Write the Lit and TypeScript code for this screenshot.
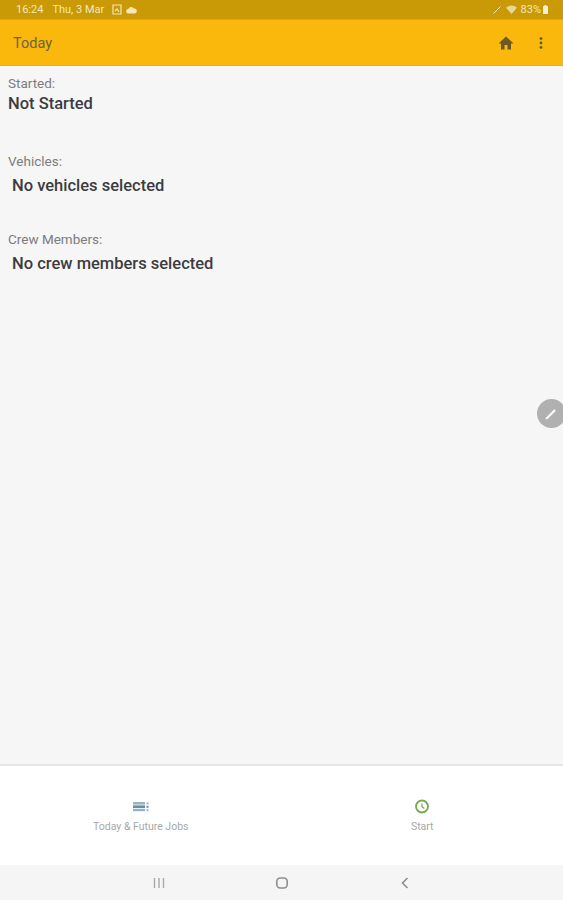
import { LitElement, html, css } from "lit";
import { customElement } from "lit/decorators.js";

@customElement("app-root")
export class AppRoot extends LitElement {
  static styles = css`
    :host { display: flex; flex-direction: column; width: 563px; height: 900px; font-family: Roboto, "Liberation Sans", sans-serif; background: #f6f6f6; overflow: hidden; }
    .status { height: 19px; flex: none; background: #c99a05; color: #f3e6bd; font-size: 11px; display: flex; align-items: center; padding: 0 15px 0 16px; box-sizing: border-box; }
    .status .date { margin-left: 9px; }
    .status svg { display: block; }
    .status .left-icons { display: flex; align-items: center; gap: 4px; margin-left: 8px; }
    .spacer { flex: 1; }
    .status .right-icons { display: flex; align-items: center; gap: 2px; }
    .status .right-icons .wifi { margin: 0 2px 0 3px; }
    .appbar { height: 47px; flex: none; background: #f9b80b; border-top: 1px solid #ec9a3c; border-bottom: 1px solid #e8ad12; box-sizing: border-box; display: flex; align-items: center; padding: 2px 20px 0 13px; color: #6f6240; font-size: 14.5px; font-weight: 400; }
    .appbar .actions { display: flex; align-items: center; gap: 25px; margin-top: -2px; }
    .appbar svg { display: block; }
    .content { flex: 1; position: relative; padding: 10px 8px 0; box-sizing: border-box; color: #3c3c40; }
    .label { font-size: 13.5px; line-height: 15px; color: #7c7c7f; }
    .value { font-size: 16.5px; line-height: 20px; font-weight: 500; margin-top: 3px; }
    .section { height: 78px; }
    .indent { padding-left: 4px; margin-top: 7px; }
    .fab { position: absolute; right: -3px; top: 333px; width: 29px; height: 29px; border-radius: 50%; background: #b0b0b0; display: flex; align-items: center; padding-left: 7px; box-sizing: border-box; }
    .tabs { height: 101px; flex: none; background: #fff; border-top: 2px solid #e6e6e6; box-sizing: border-box; display: grid; grid-template-columns: 1fr 1fr; }
    .tab { display: flex; flex-direction: column; align-items: center; padding-top: 35px; font-size: 10.5px; color: #a8a8a8; }
    .tab span { margin-top: 8px; line-height: 13px; }
    .tab svg { display: block; }
    .tab .clock { margin-top: -3px; }
    .tab .start { margin-top: 6px; }
    .nav { height: 35px; flex: none; background: #f5f5f5; display: grid; grid-template-columns: 1fr 1fr 1fr; padding: 0 97px; box-sizing: border-box; align-items: center; justify-items: center; }
    .nav svg { display: block; }
  `;

  render() {
    return html`
      <div class="status">
        <span>16:24</span><span class="date">Thu, 3 Mar</span>
        <div class="left-icons">
          <svg width="10" height="11" viewBox="0 0 10 11" fill="none" stroke="#f3e6bd" stroke-width="1.2"><path d="M1 1h8v9H1z"/><path d="M3 7l2-2 2 3" /></svg>
          <svg width="11" height="8" viewBox="0 0 11 8" fill="#f3e6bd"><path d="M2.5 7.5a2.2 2.2 0 0 1-.3-4.4A3.2 3.2 0 0 1 8 2.5a2.5 2.5 0 0 1 .6 5z"/></svg>
        </div>
        <div class="spacer"></div>
        <div class="right-icons">
          <svg width="8" height="8" viewBox="0 0 8 8" stroke="#f3e6bd" fill="none"><path d="M0.5 7.5l7-7"/></svg>
          <svg class="wifi" width="11" height="9" viewBox="0 0 11 9" fill="#e8d597"><path d="M0 2.8A8 8 0 0 1 11 2.8L5.5 9z"/></svg>
          <span>83%</span>
          <svg width="5" height="9" viewBox="0 0 5 9" fill="#f6efd8"><path d="M1.5 0h2v1H5v8H0V1h1.5z"/></svg>
        </div>
      </div>
      <div class="appbar">
        <span>Today</span>
        <div class="spacer"></div>
        <div class="actions">
          <svg width="16" height="14" viewBox="0 0 16 14" fill="#6b5a25"><path d="M8 0.5L0.5 7.5H3V13.5H6.5V9H9.5V13.5H13V7.5H15.5z"/></svg>
          <svg width="4" height="12" viewBox="0 0 4 12" fill="#5f5a30"><circle cx="2" cy="1.6" r="1.4"/><circle cx="2" cy="6" r="1.4"/><circle cx="2" cy="10.4" r="1.4"/></svg>
        </div>
      </div>
      <div class="content">
        <div class="section">
          <div class="label">Started:</div>
          <div class="value">Not Started</div>
        </div>
        <div class="section">
          <div class="label">Vehicles:</div>
          <div class="value indent">No vehicles selected</div>
        </div>
        <div class="section">
          <div class="label">Crew Members:</div>
          <div class="value indent">No crew members selected</div>
        </div>
        <div class="fab">
          <svg width="14" height="14" viewBox="0 0 14 14" fill="#fff"><path d="M1.5 12.5l.6-2L10.3 2.2l1.6 1.6-8.3 8.1z"/></svg>
        </div>
      </div>
      <div class="tabs">
        <div class="tab">
          <svg width="16" height="11" viewBox="0 0 16 11">
            <rect x="0" y="1" width="12" height="2.6" fill="#9db4c0"/>
            <rect x="0" y="4.4" width="12" height="2.6" fill="#5e93a5"/>
            <rect x="0" y="7.8" width="12" height="2.4" fill="#8fb6bf"/>
            <rect x="13.5" y="1.4" width="2" height="2" fill="#9db4c0"/>
            <rect x="13.5" y="4.8" width="2" height="2" fill="#5e93a5"/>
            <rect x="13.5" y="8.2" width="2" height="2" fill="#8fb6bf"/>
          </svg>
          <span>Today &amp; Future Jobs</span>
        </div>
        <div class="tab">
          <svg class="clock" width="16" height="16" viewBox="0 0 16 16" fill="none" stroke="#78a94e">
            <circle cx="8" cy="8.5" r="6" stroke-width="1.8"/>
            <path d="M8 5.5V8.7L10.3 10.5" stroke-width="1.3"/>
          </svg>
          <span class="start">Start</span>
        </div>
      </div>
      <div class="nav">
        <svg width="12" height="12" viewBox="0 0 12 12" stroke="#a8a8a8" stroke-width="1.4"><path d="M1.5 1V11M6 1V11M10.5 1V11"/></svg>
        <svg width="14" height="14" viewBox="0 0 14 14" fill="none" stroke="#8e8e8e" stroke-width="1.6"><rect x="1.8" y="2" width="10.4" height="10" rx="3.4"/></svg>
        <svg width="10" height="12" viewBox="0 0 10 12" fill="none" stroke="#8e8e8e" stroke-width="1.6"><path d="M7.5 1L2.5 6l5 5"/></svg>
      </div>
    `;
  }
}
